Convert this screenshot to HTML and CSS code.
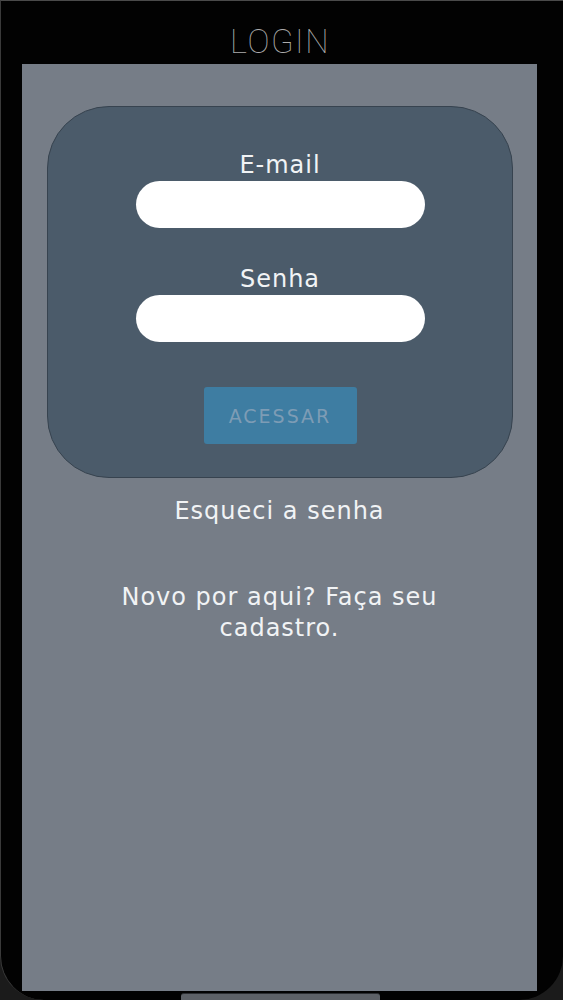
FILE: index.html
```
<!DOCTYPE html>
<html lang="pt-BR">
<head>
    <meta charset="UTF-8">
    <meta name="viewport" content="width=device-width, initial-scale=1.0">
    <title>Login</title>
    <link rel="stylesheet" href="styles.css">
</head>
<body>
    <div class="device">
        <div class="title-bar">LOGIN</div>

        <div class="screen">
            <form class="login-card" onsubmit="return false;">
                <label class="field-label" for="email">E-mail</label>
                <input class="field-input" id="email" type="email">

                <label class="field-label senha" for="senha">Senha</label>
                <input class="field-input" id="senha" type="password">

                <button class="btn-acessar" type="submit">ACESSAR</button>
            </form>

            <a class="link forgot" href="#">Esqueci a senha</a>
            <a class="link signup" href="#">Novo por aqui? Faça seu cadastro.</a>
        </div>

        <div class="home-bar"></div>
    </div>
</body>
</html>
```

FILE: styles.css
```
body {
    margin: 0;
    background: #1b1b1b;
    font-family: "DejaVu Sans", Verdana, sans-serif;
}
.device {
    height: 1000px;
    box-sizing: border-box;
    background: #020202;
    border-top: 1px solid #4a4a4a;
    border-left: 1px solid #3a3a3a;
    border-radius: 0 0 44px 44px;
    display: flex;
    flex-direction: column;
    overflow: hidden;
}
.title-bar {
    height: 63px;
    box-sizing: border-box;
    padding: 17px 4px 0 0;
    display: flex;
    align-items: center;
    justify-content: center;
    font-family: Roboto, "Liberation Sans", sans-serif;
    font-weight: 100;
    font-size: 33px;
    color: #acacac;
    letter-spacing: 1.5px;
}
.screen {
    flex: 1;
    margin: 0 26px 2px 21px;
    background: #767d87;
    display: flex;
    flex-direction: column;
    align-items: center;
}
.login-card {
    box-sizing: border-box;
    width: 466px;
    height: 372px;
    margin-top: 42px;
    margin-left: 1px;
    padding: 43px 0 33px;
    background: #4b5b6a;
    border: 1px solid #37434f;
    border-radius: 62px;
    display: flex;
    flex-direction: column;
    align-items: center;
}
.field-label {
    font-size: 24px;
    line-height: 30px;
    letter-spacing: 1px;
    color: #f1f3f5;
    margin-bottom: 1px;
}
.field-label.senha {
    margin-top: 36px;
}
.field-input {
    box-sizing: border-box;
    width: 289px;
    height: 47px;
    border: none;
    border-radius: 24px;
    background: #ffffff;
    padding: 0 20px;
    font-size: 18px;
    outline: none;
}
.btn-acessar {
    margin-top: 45px;
    width: 153px;
    height: 57px;
    border: none;
    border-radius: 3px;
    background: #3e7da2;
    color: #7d9cb5;
    font-family: "DejaVu Sans", Verdana, sans-serif;
    font-size: 19px;
    letter-spacing: 2px;
    cursor: pointer;
}
.link {
    color: #f1f3f5;
    text-decoration: none;
    font-size: 24px;
    letter-spacing: 1px;
    text-align: center;
}
.forgot {
    margin-top: 18px;
    line-height: 30px;
}
.signup {
    margin-top: 56px;
    max-width: 340px;
    line-height: 31px;
}
.home-bar {
    align-self: center;
    width: 199px;
    height: 7px;
    margin-left: -4px;
    box-sizing: border-box;
    border-top: 1px solid #2a2c30;
    border-radius: 3px 3px 0 0;
    background: #5d6167;
    flex-shrink: 0;
}
```
